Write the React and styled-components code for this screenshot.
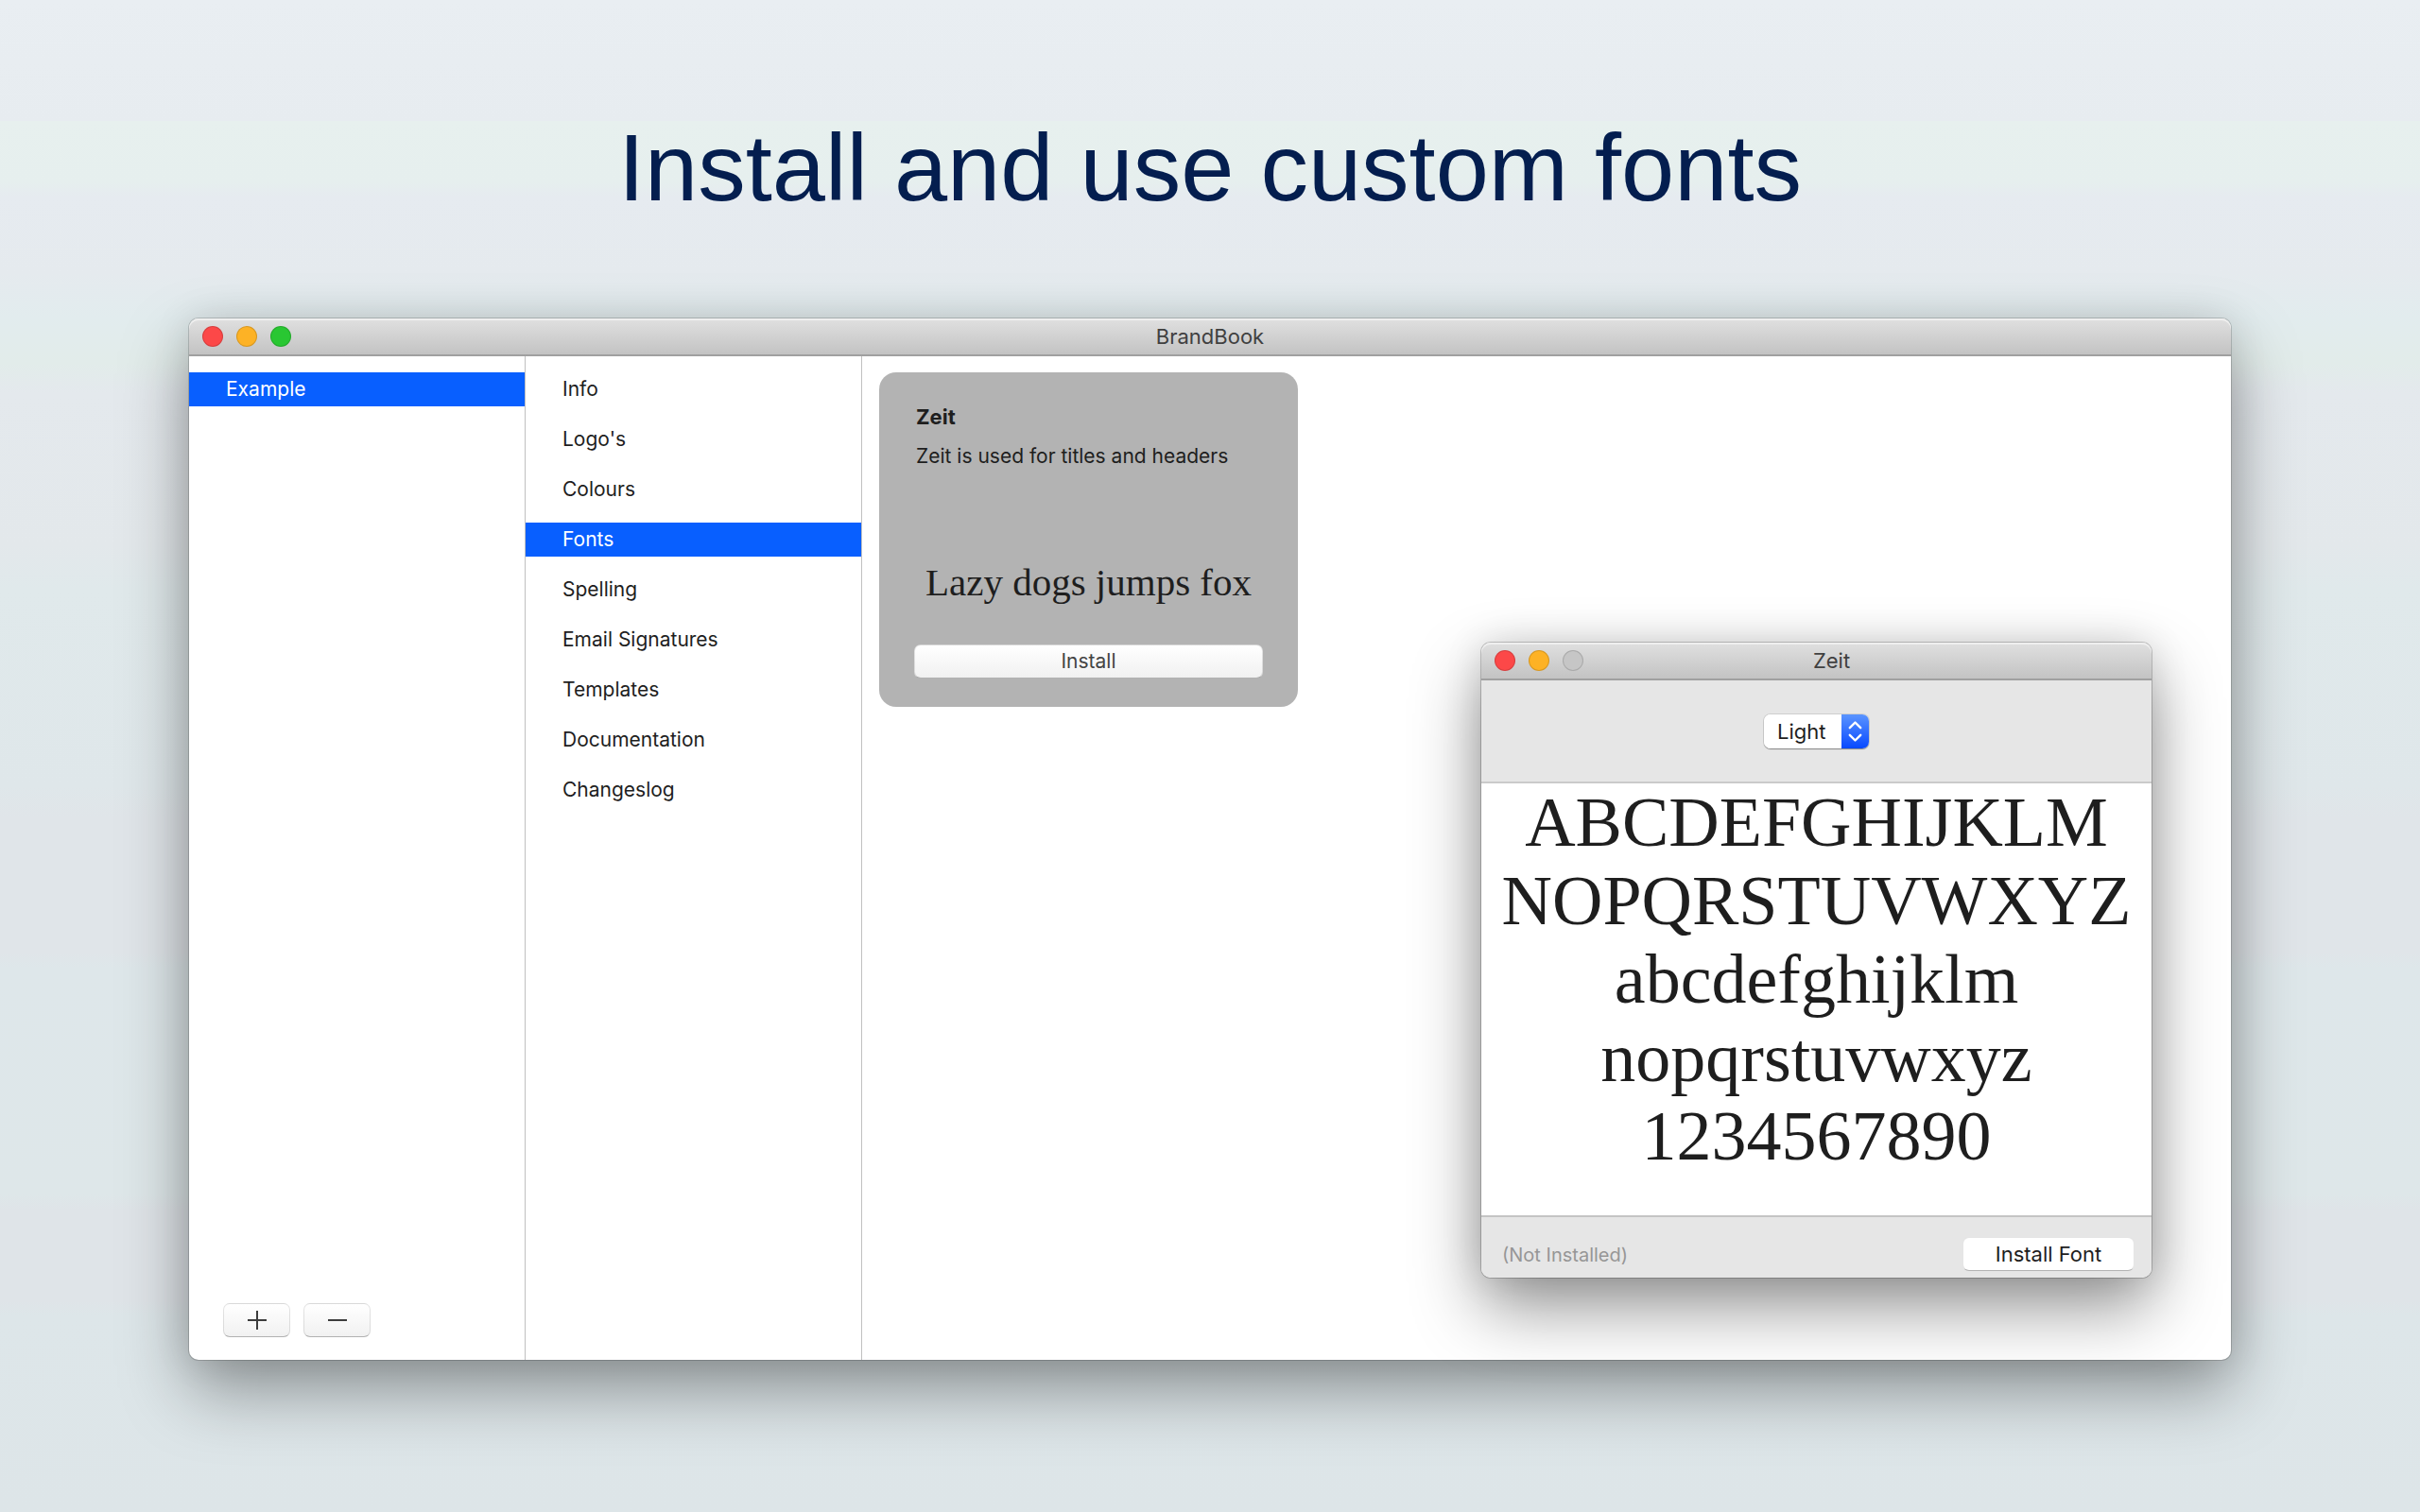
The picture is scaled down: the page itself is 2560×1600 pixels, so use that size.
import React, { useState } from 'react';
import styled, { createGlobalStyle, ThemeProvider } from 'styled-components';

const theme = {
  navy: '#041e4f',
  blue: '#085fff',
  ink: '#1e1e1e',
  line: '#c0c0c0',
  regular: 400,
  bold: 700,
  fontSize: {
    s: '20px',
    m: '21px',
    l: '22px',
    sample: '41px',
    glyphs: '74px',
    hero: '101px',
  },
  ui: "Inter, 'Liberation Sans', sans-serif",
  serif: "'Liberation Serif', serif",
};

const GlobalStyle = createGlobalStyle`
  *, *::before, *::after {
    box-sizing: border-box;
  }

  body {
    margin: 0;
    background: #dde6e8;
  }

  button, select {
    font-family: inherit;
    margin: 0;
    padding: 0;
  }
`;

const StyledPage = styled.main`
  display: flex;
  flex-direction: column;
  min-height: 100vh;
  padding: 117px 200px 161px;
  font-family: ${(props) => props.theme.ui};
  color: ${(props) => props.theme.ink};
  background: linear-gradient(
    #e9eef2 0%,
    #e7ecf0 8%,
    #e7f0ee 8%,
    #e6efee 12%,
    #e6ebf0 13%,
    #e5eaee 18%,
    #e2ecee 21%,
    #e2ecea 24%,
    #e4e9ed 26%,
    #e3e8eb 36%,
    #e0e9eb 39%,
    #dfe7ea 52%,
    #e0e5e9 54%,
    #e0e5e9 63%,
    #dee7ea 64%,
    #dee7e9 79%,
    #dfe4e8 80%,
    #dfe4e8 86%,
    #dde6e9 87%,
    #dde5e8 100%
  );
`;

const StyledHeadline = styled.h1`
  margin: 0 0 100px;
  text-align: center;
  font-family: 'Liberation Sans', sans-serif;
  font-size: ${(props) => props.theme.fontSize.hero};
  font-weight: ${(props) => props.theme.regular};
  line-height: 120px;
  color: ${(props) => props.theme.navy};
`;

const StyledWindow = styled.section`
  position: relative;
  flex: 1;
  display: flex;
  flex-direction: column;
  border-radius: 10px;
  background: #fff;
  box-shadow:
    0 0 0 1px rgba(0, 0, 0, 0.16),
    0 32px 72px rgba(0, 0, 0, 0.37),
    0 0 40px rgba(0, 0, 0, 0.1);
`;

const StyledTitleBar = styled.header`
  display: grid;
  grid-template-columns: 1fr auto 1fr;
  align-items: center;
  height: 40px;
  padding: 0 14px;
  border-radius: 10px 10px 0 0;
  border-bottom: 2px solid #a0a0a0;
  background: linear-gradient(#e0e0e0, #c3c3c3);
  box-shadow: inset 0 2px 0 #efefef;
`;

const StyledTitle = styled.h2`
  margin: 0;
  padding-left: ${({ $indent }) => ($indent ? '32px' : '0')};
  font-size: ${(props) => props.theme.fontSize.l};
  font-weight: ${(props) => props.theme.regular};
  line-height: 38px;
  color: #404040;
`;

const StyledLights = styled.div`
  display: flex;
  gap: 14px;
`;

const StyledLight = styled.button`
  width: 22px;
  height: 22px;
  border: 1px solid rgba(0, 0, 0, 0.14);
  border-radius: 50%;
  background: ${({ $color }) => $color};
`;

const StyledBody = styled.div`
  flex: 1;
  display: flex;
`;

const StyledColumn = styled.nav`
  display: flex;
  flex-direction: column;
  justify-content: space-between;
  flex: 0 0 356px;
  padding-top: 17px;
  border-right: 1px solid ${(props) => props.theme.line};
`;

const StyledList = styled.ul`
  display: flex;
  flex-direction: column;
  gap: 17px;
  margin: 0;
  padding: 0;
  list-style: none;
`;

const StyledItem = styled.button`
  display: block;
  width: 100%;
  height: 36px;
  border: 0;
  && {
    padding: 0 39px;
  }
  text-align: left;
  font-size: ${(props) => props.theme.fontSize.m};
  line-height: 36px;
  color: ${({ $active, theme: t }) => ($active ? '#fff' : t.ink)};
  background: ${({ $active, theme: t }) => ($active ? t.blue : 'transparent')};
`;

const StyledActions = styled.div`
  display: flex;
  gap: 14px;
  padding: 0 36px 24px;
`;

const StyledPushButton = styled.button`
  height: 36px;
  border: 1px solid rgba(0, 0, 0, 0.1);
  border-bottom-color: rgba(0, 0, 0, 0.3);
  border-radius: 7px;
  background: linear-gradient(#fff, #f1f1f1);
  font-size: ${(props) => props.theme.fontSize.m};
  line-height: 34px;
  color: #444;
`;

const StyledIconButton = styled(StyledPushButton)`
  display: flex;
  align-items: center;
  justify-content: center;
  width: 71px;
`;

const StyledContent = styled.div`
  flex: 1;
  padding: 17px 18px;
`;

const StyledCard = styled.article`
  display: flex;
  flex-direction: column;
  width: 443px;
  height: 354px;
  padding: 32px 37px 30px;
  border-radius: 18px;
  background: #b3b3b3;
`;

const StyledCardTitle = styled.h3`
  margin: 0 2px;
  font-size: ${(props) => props.theme.fontSize.l};
  font-weight: ${(props) => props.theme.bold};
  line-height: 30px;
`;

const StyledCardText = styled.p`
  margin: 12px 2px 0;
  font-size: ${(props) => props.theme.fontSize.m};
  line-height: 30px;
  white-space: nowrap;
`;

const StyledSample = styled.p`
  margin: auto 0 42px;
  text-align: center;
  font-family: ${(props) => props.theme.serif};
  font-size: ${(props) => props.theme.fontSize.sample};
  line-height: 48px;
  white-space: nowrap;
`;

const StyledPanel = styled(StyledWindow)`
  position: absolute;
  right: 84px;
  bottom: 87px;
  width: 709px;
  box-shadow:
    0 0 0 1px rgba(0, 0, 0, 0.2),
    0 32px 72px rgba(0, 0, 0, 0.42),
    0 0 40px rgba(0, 0, 0, 0.12);
`;

const StyledToolbar = styled.div`
  display: flex;
  justify-content: center;
  align-items: center;
  height: 109px;
  border-bottom: 2px solid #cacaca;
  background: #e6e6e6;
`;

const StyledPicker = styled.label`
  display: flex;
  height: 36px;
  border-radius: 7px;
  background: #fff;
  overflow: hidden;
  box-shadow: 0 1px 1px rgba(0, 0, 0, 0.35), 0 0 0 1px rgba(0, 0, 0, 0.1);
`;

const StyledSelect = styled.select`
  width: 82px;
  border: 0;
  appearance: none;
  && {
    padding-left: 14px;
  }
  font-size: ${(props) => props.theme.fontSize.l};
  color: ${(props) => props.theme.ink};
  background: #fff;
`;

const StyledStepper = styled.span`
  display: flex;
  align-items: center;
  justify-content: center;
  width: 29px;
  background: linear-gradient(#5a94ff, #0849ff);
`;

const StyledGlyphs = styled.div`
  height: 457px;
  text-align: center;
  font-family: ${(props) => props.theme.serif};
  font-size: ${(props) => props.theme.fontSize.glyphs};
  line-height: 83px;

  p {
    margin: 0;
  }
`;

const StyledFooter = styled.footer`
  display: flex;
  justify-content: space-between;
  align-items: flex-end;
  height: 66px;
  padding: 0 18px 7px 22px;
  border-top: 2px solid #c4c4c4;
  border-radius: 0 0 10px 10px;
  background: #e6e6e6;
`;

const StyledStatus = styled.span`
  font-size: ${(props) => props.theme.fontSize.s};
  line-height: 34px;
  color: #969696;
`;

const StyledInstallFont = styled(StyledPushButton)`
  width: 182px;
  background: #fff;
  font-size: ${(props) => props.theme.fontSize.l};
  color: ${(props) => props.theme.ink};
`;

const sections = [
  'Info',
  "Logo's",
  'Colours',
  'Fonts',
  'Spelling',
  'Email Signatures',
  'Templates',
  'Documentation',
  'Changeslog',
];

const glyphRows = ['ABCDEFGHIJKLM', 'NOPQRSTUVWXYZ', 'abcdefghijklm', 'nopqrstuvwxyz', '1234567890'];

const TitleBar = ({ title, canZoom, indent }) => (
  <StyledTitleBar>
    <StyledLights>
      <StyledLight $color="#fc4848" aria-label="Close" />
      <StyledLight $color="#fdb225" aria-label="Minimise" />
      <StyledLight $color={canZoom ? '#29c732' : '#c6c6c6'} aria-label="Zoom" disabled={!canZoom} />
    </StyledLights>
    <StyledTitle $indent={indent}>{title}</StyledTitle>
  </StyledTitleBar>
);

const FontCard = ({ name, description, sample }) => (
  <StyledCard>
    <StyledCardTitle>{name}</StyledCardTitle>
    <StyledCardText>{description}</StyledCardText>
    <StyledSample>{sample}</StyledSample>
    <StyledPushButton>Install</StyledPushButton>
  </StyledCard>
);

const FontPanel = () => (
  <StyledPanel>
    <TitleBar title="Zeit" indent />
    <StyledToolbar>
      <StyledPicker>
        <StyledSelect aria-label="Font weight" defaultValue="Light">
          <option>Light</option>
        </StyledSelect>
        <StyledStepper>
          <svg width="15" height="24" viewBox="0 0 15 24" fill="none" stroke="#fff" strokeWidth="2.4" strokeLinecap="round" strokeLinejoin="round">
            <path d="M1.8 8.2 7.5 2.5 13.2 8.2M1.8 15.8 7.5 21.5 13.2 15.8" />
          </svg>
        </StyledStepper>
      </StyledPicker>
    </StyledToolbar>
    <StyledGlyphs>
      {glyphRows.map((row) => (
        <p key={row}>{row}</p>
      ))}
    </StyledGlyphs>
    <StyledFooter>
      <StyledStatus>(Not Installed)</StyledStatus>
      <StyledInstallFont>Install Font</StyledInstallFont>
    </StyledFooter>
  </StyledPanel>
);

const App = () => {
  const [section, setSection] = useState('Fonts');

  return (
    <ThemeProvider theme={theme}>
      <GlobalStyle />
      <StyledPage>
        <StyledHeadline>Install and use custom fonts</StyledHeadline>
        <StyledWindow>
          <TitleBar title="BrandBook" canZoom />
          <StyledBody>
            <StyledColumn aria-label="Brands">
              <StyledList>
                <li>
                  <StyledItem $active>Example</StyledItem>
                </li>
              </StyledList>
              <StyledActions>
                <StyledIconButton aria-label="Add brand">
                  <svg width="20" height="20" stroke="#3c3c3c" strokeWidth="2">
                    <path d="M10 0V20M0 10H20" />
                  </svg>
                </StyledIconButton>
                <StyledIconButton aria-label="Remove brand">
                  <svg width="20" height="20" stroke="#3c3c3c" strokeWidth="2">
                    <path d="M0 10H20" />
                  </svg>
                </StyledIconButton>
              </StyledActions>
            </StyledColumn>
            <StyledColumn aria-label="Sections">
              <StyledList>
                {sections.map((name) => (
                  <li key={name}>
                    <StyledItem $active={name === section} onClick={() => setSection(name)}>
                      {name}
                    </StyledItem>
                  </li>
                ))}
              </StyledList>
            </StyledColumn>
            <StyledContent>
              <FontCard
                name="Zeit"
                description="Zeit is used for titles and headers"
                sample="Lazy dogs jumps fox"
              />
            </StyledContent>
          </StyledBody>
          <FontPanel />
        </StyledWindow>
      </StyledPage>
    </ThemeProvider>
  );
};

export default App;
